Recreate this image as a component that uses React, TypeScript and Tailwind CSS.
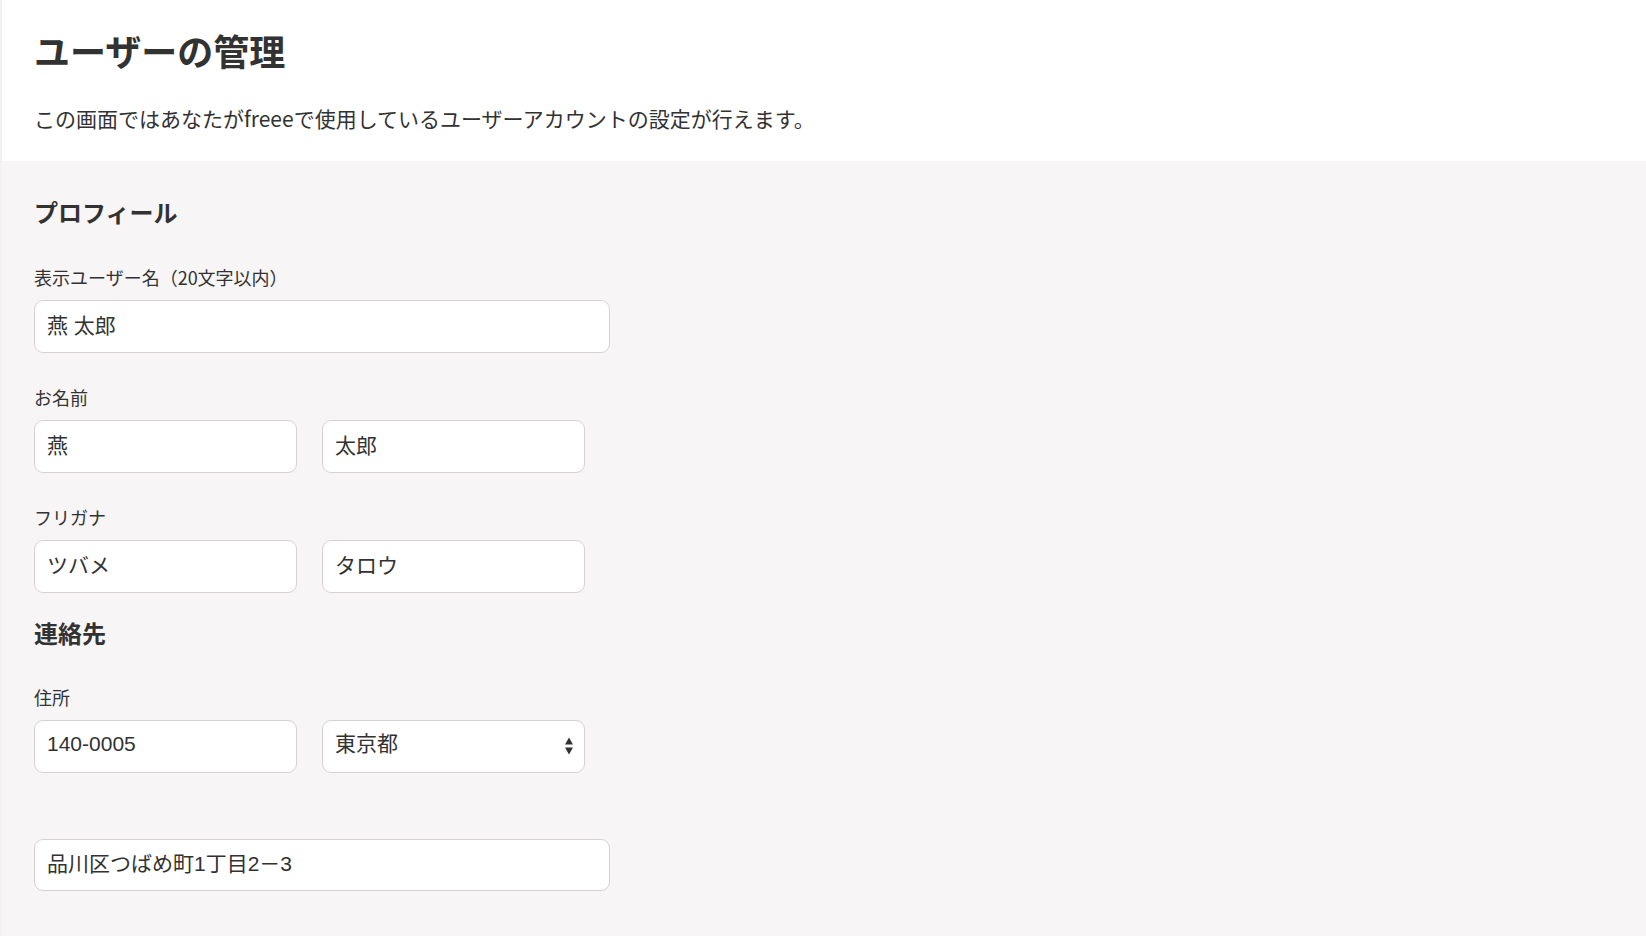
import React from 'react';

const inputClass =
  "h-[52.5px] rounded-[9px] border border-[#d7d2d2] bg-white px-[12px] pb-[5px] text-[21px] text-[#323232] font-['Liberation_Sans','Noto_Sans_CJK_JP',sans-serif] outline-none";

function Field({ label, children }: { label: string; children: React.ReactNode }) {
  return (
    <div className="mb-[31.5px]">
      <div className={`${label ? 'mb-[9px]' : 'mb-[7.5px]'} h-[27px] text-[18px] leading-[27px]`}>{label}</div>
      {children}
    </div>
  );
}

function SelectArrows() {
  return (
    <svg width="8" height="17" viewBox="0 0 8 17" className="pointer-events-none absolute right-[12px] top-1/2 -translate-y-1/2" aria-hidden="true">
      <path d="M4 0 L8 7 L0 7 Z" fill="#323232" />
      <path d="M0 10 L8 10 L4 17 Z" fill="#323232" />
    </svg>
  );
}

export default function App() {
  return (
    <div className="min-h-screen border-l-2 border-[#f2f0f0] bg-[#f7f5f5] font-['Noto_Sans_CJK_JP',sans-serif] text-[#323232]">
      {/* Header */}
      <div className="h-[161px] bg-white pl-[32px] pt-[22.5px]">
        <h1 className="text-[36px] font-bold leading-[54px]">ユーザーの管理</h1>
        <p className="mt-[26px] text-[21px] leading-[31.5px]">
          この画面ではあなたがfreeeで使用しているユーザーアカウントの設定が行えます。
        </p>
      </div>

      {/* Form */}
      <div className="pl-[32px] pt-[33px]">
        <h2 className="mb-[34px] text-[24px] font-bold leading-[36px]">プロフィール</h2>

        <Field label="表示ユーザー名（20文字以内）">
          <input className={`${inputClass} w-[576px]`} defaultValue="燕 太郎" />
        </Field>

        <Field label="お名前">
          <div className="flex gap-[25px]">
            <input className={`${inputClass} w-[263px]`} defaultValue="燕" />
            <input className={`${inputClass} w-[263px]`} defaultValue="太郎" />
          </div>
        </Field>

        <div className="mb-[22.5px]">
          <div className="mb-[9px] h-[27px] text-[18px] leading-[27px]">フリガナ</div>
          <div className="flex gap-[25px]">
            <input className={`${inputClass} w-[263px]`} defaultValue="ツバメ" />
            <input className={`${inputClass} w-[263px]`} defaultValue="タロウ" />
          </div>
        </div>

        <h2 className="mb-[33px] text-[24px] font-bold leading-[36px]">連絡先</h2>

        <Field label="住所">
          <div className="flex gap-[25px]">
            <input className={`${inputClass} w-[263px]`} defaultValue="140-0005" />
            <div className="relative w-[263px]">
              <select className={`${inputClass} w-full appearance-none`} defaultValue="東京都">
                <option>東京都</option>
                <option>神奈川県</option>
                <option>千葉県</option>
                <option>埼玉県</option>
              </select>
              <SelectArrows />
            </div>
          </div>
        </Field>

        <Field label="">
          <input className={`${inputClass} w-[576px]`} defaultValue="品川区つばめ町1丁目2－3" />
        </Field>
      </div>
    </div>
  );
}
